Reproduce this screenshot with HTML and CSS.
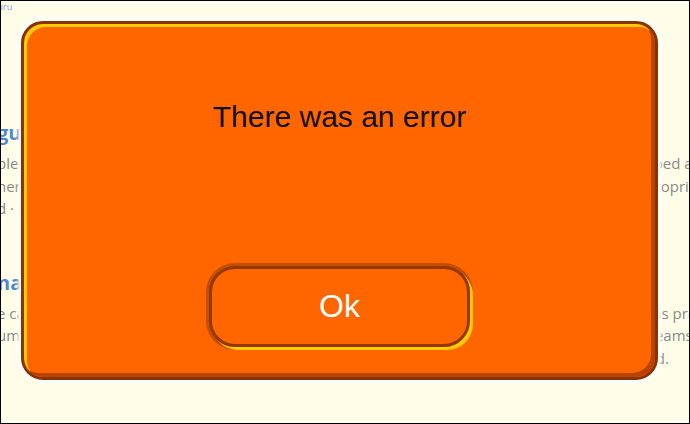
FILE: index.html
```html
<!DOCTYPE html>
<html lang="en">
<head>
<meta charset="UTF-8">
<meta name="viewport" content="width=device-width, initial-scale=1.0">
<title>Forum guidelines</title>
<link rel="stylesheet" href="styles.css">
</head>
<body>
<div class="screen">
  <div class="crumbs">Guru</div>

  <!-- Page content behind the dialog -->
  <div class="columns">
    <section class="col">
      <h2>guidelines for posting</h2>
      <p>
        <span>please keep every post on topic</span>
        <span>here are the rules we ask you to follow</span>
        <span>d &middot; updated monthly</span>
      </p>
      <h2>names and accounts</h2>
      <p>
        <span>e careful when choosing a name</span>
        <span>umbers and symbols are allowed</span>
      </p>
    </section>
    <section class="col col-right">
      <h2>&nbsp;</h2>
      <p>
        <span>and the steps that were described and</span>
        <span>moderators will step in where appropriate</span>
        <span>&nbsp;</span>
      </p>
      <h2>&nbsp;</h2>
      <p>
        <span>screenshots can be attached as proof</span>
        <span>reports are sent to the support teams to</span>
        <span class="last">review what is being used.</span>
      </p>
    </section>
  </div>

  <div class="footer-line"></div>

  <!-- Error dialog -->
  <div class="modal">
    <div class="modal-title">There was an error</div>
    <button type="button" class="ok-btn">Ok</button>
  </div>
</div>
</body>
</html>
```

FILE: styles.css
```css
body {
  margin: 0;
  background: #fffde8;
}
.screen {
  position: relative;
  width: 690px;
  height: 424px;
  box-sizing: border-box;
  border: 1px solid #000;
  overflow: hidden;
  display: flex;
  flex-direction: column;
  background: #fffde8;
  font-family: "Open Sans", sans-serif;
}
.crumbs {
  margin-left: -10px;
  height: 12px;
  font-size: 9px;
  line-height: 12px;
  color: #7fa6d6;
}
.columns {
  display: grid;
  grid-template-columns: 1fr 1fr;
  gap: 40px;
  margin: 107px -22px 0 -4px;
  white-space: nowrap;
}
.col h2 {
  margin: 0;
  font-size: 20px;
  line-height: 26px;
  font-weight: bold;
  color: #4f8acb;
}
.col p {
  margin: 6px 0 50px;
  font-size: 15px;
  line-height: 22.5px;
  color: #8a8a8a;
}
.col p span {
  display: block;
}
.col-right {
  text-align: right;
}
.col-right .last {
  padding-right: 42px;
}
.footer-line {
  margin-top: auto;
  margin-bottom: 6px;
  height: 3px;
  background: #ffe2a6;
}
.modal {
  position: absolute;
  left: 20px;
  top: 20px;
  width: 637px;
  height: 359px;
  box-sizing: border-box;
  border: 3px solid #8a3300;
  border-radius: 22px;
  background: #ff6600;
  box-shadow: 0 0 3px 3px #fff, inset 3px 3px 0 #ffcc00, inset -4px -4px 0 #b94300;
  display: flex;
  flex-direction: column;
  align-items: center;
  padding: 76px 0 30px;
}
.modal-title {
  font-family: "Liberation Sans", Arial, sans-serif;
  font-size: 30px;
  line-height: 34px;
  color: #111;
}
.ok-btn {
  margin-top: auto;
  width: 261px;
  height: 81px;
  border: 3px solid #953800;
  border-radius: 26px;
  background: #ff6600;
  box-shadow: 3px 3px 0 #ffcc00, 0 0 0 3px #c24e00;
  color: #fff;
  font-family: "Liberation Sans", Arial, sans-serif;
  font-size: 32px;
  cursor: pointer;
}
```
